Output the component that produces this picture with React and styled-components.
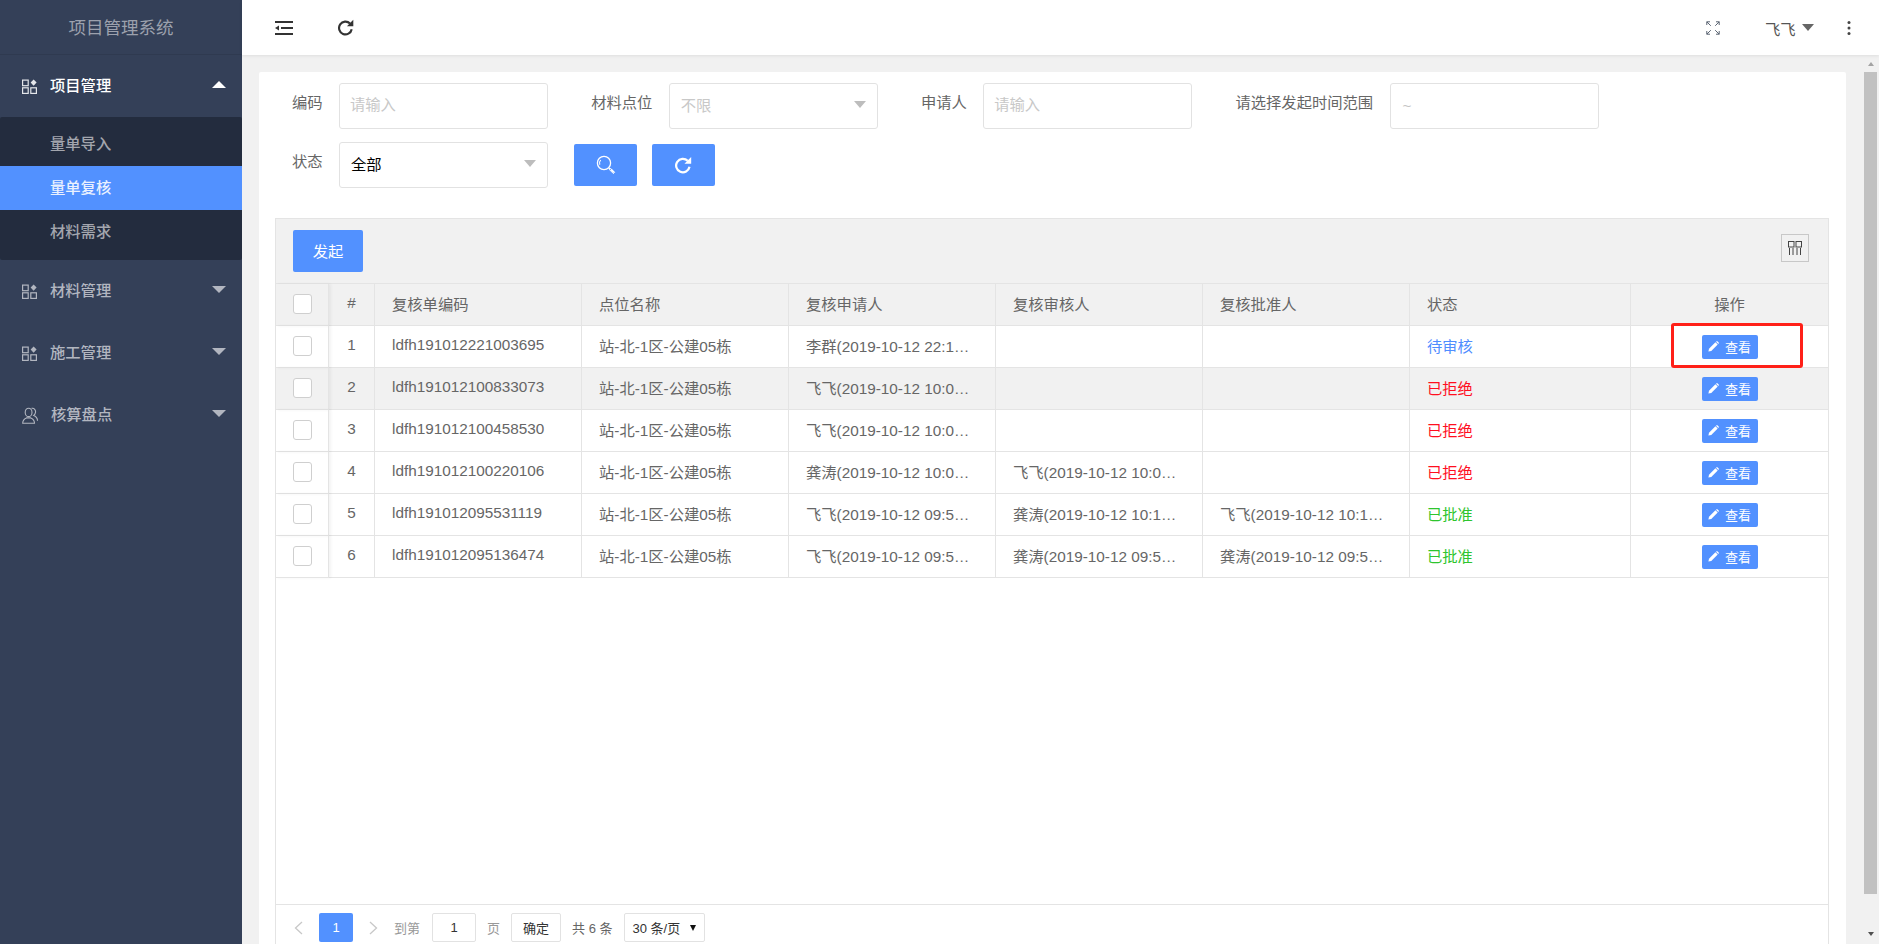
import React from 'react';
import styled, {createGlobalStyle} from 'styled-components';

const GlobalStyle = createGlobalStyle`
    html, body {
        margin: 0;
        padding: 0;
        height: 100%;
        overflow: hidden;
        background: #f1f1f1;
    }
    body, input {
        font-family: "Liberation Sans", "Noto Sans CJK SC", sans-serif;
        font-size: 15.3px;
    }
    * {
        box-sizing: border-box;
    }
`;

const Page = styled.div`
    display: flex;
    width: 100%;
    height: 100vh;
    overflow: hidden;
`;

/* sidebar */
const Sidebar = styled.aside`
    flex: 0 0 242px;
    background: #344058;
    color: #b2b6c0;
`;
const Brand = styled.div`
    height: 55px;
    line-height: 56px;
    text-align: center;
    font-size: 17.5px;
    color: #9ca1ad;
    border-bottom: 1px solid #2f3a50;
`;
const MenuItem = styled.div`
    display: flex;
    align-items: center;
    height: 62px;
    padding: 0 16px 0 22px;
    font-weight: 500;
    color: ${props => props.open ? "#ffffff" : "#b2b6c0"};
`;
const MenuLabel = styled.span`
    margin: -5px 0 0 13px;
    flex: 1;
`;
const MenuArrow = styled.span`
    width: 0;
    height: 0;
    margin-top: -3px;
    border-left: 7px solid transparent;
    border-right: 7px solid transparent;
    ${props => props.up ? "border-bottom: 7px solid #ffffff" : "border-top: 7px solid #b2b6c0"};
`;
const SubMenu = styled.div`
    background: #232c3e;
    padding: 5px 0 6px;
    border-radius: 2px;
`;
const SubItem = styled.div`
    height: 44px;
    line-height: 43px;
    padding-left: 50px;
    font-weight: 500;
    background: ${props => props.active ? "#5291ff" : "transparent"};
    color: ${props => props.active ? "#eaf1ff" : "#a3a6ae"};
`;

/* top bar */
const Main = styled.div`
    flex: 1;
    min-width: 0;
    display: flex;
    flex-direction: column;
`;
const TopBar = styled.header`
    flex: 0 0 55px;
    display: flex;
    align-items: center;
    padding: 0 28px 0 33px;
    background: #ffffff;
    box-shadow: 0 1px 3px rgba(0, 0, 0, .08);
    position: relative;
    color: #555;
`;
const TopLeft = styled.div`
    display: flex;
    align-items: center;
    gap: 45px;
    flex: 1;
`;
const TopUser = styled.div`
    display: flex;
    align-items: center;
    margin-left: 45px;
`;
const UserCaret = styled.span`
    width: 0;
    height: 0;
    margin-left: 6px;
    border-left: 6.5px solid transparent;
    border-right: 6.5px solid transparent;
    border-top: 7px solid #666;
`;
const Dots = styled.svg`
    margin-left: 33.5px;
`;

/* body */
const Body = styled.div`
    flex: 1;
    min-height: 0;
    display: flex;
`;
const Content = styled.div`
    flex: 1;
    min-width: 0;
    padding: 17px 16px 0 17px;
    overflow: hidden;
`;
const Card = styled.div`
    background: #ffffff;
    border-radius: 2px;
    padding: 11px 17px 0 16px;
`;
const Filters = styled.form`
    display: flex;
    flex-wrap: wrap;
    gap: 13px 43.2px;
    padding-left: 17px;
    margin-bottom: 30px;
    color: #666;
`;
const Field = styled.label`
    display: flex;
`;
const FieldLabel = styled.span`
    line-height: 40px;
    margin-right: 16.4px;
    white-space: nowrap;
`;
const TextInput = styled.input`
    width: 209px;
    height: 46px;
    padding: 0 10px 2px;
    border: 1px solid #e2e2e2;
    border-radius: 3px;
    outline: none;
    background: #fff;
    &::placeholder {
        color: #c8c8c8;
    }
`;
const DateValue = styled.div`
    width: 209px;
    height: 46px;
    padding: 0 12px;
    line-height: 44px;
    border: 1px solid #e2e2e2;
    border-radius: 3px;
    color: #c4c4c4;
`;
const SelectBox = styled.div`
    display: flex;
    align-items: center;
    justify-content: space-between;
    width: 209px;
    height: 46px;
    padding: 0 11px 4px 11px;
    border: 1px solid #e2e2e2;
    border-radius: 3px;
    color: ${props => props.muted ? "#c8c8c8" : "#000"};
`;
const SelectCaret = styled.span`
    width: 0;
    height: 0;
    border-left: 6.5px solid transparent;
    border-right: 6.5px solid transparent;
    border-top: 7px solid #bdbdbd;
`;
const FilterButtons = styled.div`
    display: flex;
    gap: 15px;
    margin: 2px 0 0 -17px;
`;
const IconButton = styled.button`
    display: flex;
    align-items: center;
    justify-content: center;
    width: 63px;
    height: 42px;
    padding: 0;
    border: none;
    border-radius: 2px;
    background: #5291ff;
`;

/* table */
const TableBox = styled.div`
    border: 1px solid #e4e4e4;
    background: #fff;
`;
const Toolbar = styled.div`
    display: flex;
    align-items: center;
    justify-content: space-between;
    height: 65px;
    padding: 0 19px 1px 17px;
    background: #f1f1f1;
    border-bottom: 1px solid #e4e4e4;
`;
const PrimaryButton = styled.button`
    width: 70px;
    height: 42px;
    padding: 0 0 2px;
    border: none;
    border-radius: 2px;
    background: #5291ff;
    color: #fff;
    font: inherit;
`;
const ColumnsButton = styled.button`
    display: flex;
    align-items: center;
    justify-content: center;
    width: 28px;
    height: 28px;
    margin-bottom: 5px;
    padding: 0;
    border: 1px solid #c8c8c8;
    background: transparent;
`;
const TableArea = styled.div`
    height: 621px;
    border-bottom: 1px solid #e4e4e4;
`;
const Table = styled.table`
    width: 1552px;
    table-layout: fixed;
    border-collapse: separate;
    border-spacing: 0;
    color: #666;
`;
const Row = styled.tr`
    background: ${props => props.shaded ? "#f1f1f1" : "#ffffff"};
`;
const HeadCell = styled.th`
    height: 42px;
    padding: ${props => props.center ? "0 0 4px" : "0 17px 4px"};
    font-weight: normal;
    text-align: ${props => props.center ? "center" : "left"};
    background: #f1f1f1;
    border-right: 1px solid #e4e4e4;
    border-bottom: 1px solid #e4e4e4;
    &:last-child {
        border-right: none;
    }
`;
const Cell = styled.td`
    height: 42px;
    padding: ${props => props.center ? "0 0 3px" : "0 20px 3px 17px"};
    white-space: nowrap;
    overflow: hidden;
    text-overflow: ellipsis;
    text-align: ${props => props.center ? "center" : "left"};
    color: ${props => props.color || "#666"};
    border-right: 1px solid #e4e4e4;
    border-bottom: 1px solid #e4e4e4;
`;
const ActionCell = styled.td`
    position: relative;
    height: 42px;
    padding: 0;
    text-align: center;
    border-bottom: 1px solid #e4e4e4;
`;
const CheckCell = styled.td`
    position: relative;
    height: 42px;
    padding: 0 0 1px;
    border-bottom: 1px solid #e4e4e4;
    border-right: 1px solid #e4e4e4;
    box-shadow: 2px 0 3px rgba(0, 0, 0, .05);
`;
const CheckHead = styled(CheckCell).attrs({as: "th"})`
    background: #f1f1f1;
`;
const Checkbox = styled.span`
    display: block;
    width: 19px;
    height: 20px;
    margin-left: 17px;
    background: #fff;
    border: 1px solid #cfcfcf;
    border-radius: 3px;
`;
const ViewButton = styled.button`
    display: inline-flex;
    align-items: center;
    justify-content: center;
    gap: 6px;
    width: 56px;
    height: 24px;
    padding: 0;
    border: none;
    border-radius: 2px;
    background: #5291ff;
    color: #fff;
    font: inherit;
    font-size: 13px;
    vertical-align: middle;
`;
const Highlight = styled.span`
    position: absolute;
    left: 40px;
    top: -3px;
    width: 132px;
    height: 45px;
    border: 3px solid #ff2018;
    border-radius: 3px;
    pointer-events: none;
`;

/* pagination */
const Pager = styled.div`
    display: flex;
    align-items: center;
    gap: 11px;
    height: 48px;
    padding: 0 0 3px 13px;
    font-size: 13px;
    color: #666;
`;
const PageArrow = styled.svg`
    margin: 0 5px;
`;
const PageCurrent = styled.span`
    width: 34px;
    height: 29px;
    line-height: 29px;
    text-align: center;
    border-radius: 2px;
    background: #5291ff;
    color: #fff;
`;
const PageHint = styled.span`
    color: ${props => props.dark ? "#666" : "#999"};
`;
const PageBox = styled.span`
    display: flex;
    align-items: center;
    justify-content: ${props => props.between ? "space-between" : "center"};
    width: ${props => props.width}px;
    height: 29px;
    padding: 0 ${props => props.between ? "8px" : "0"};
    border: 1px solid #e2e2e2;
    border-radius: 2px;
    background: #fff;
    color: #333;
`;
const PageInput = styled(PageBox)`
    margin-left: 1px;
`;
const PageCaret = styled.span`
    width: 0;
    height: 0;
    border-left: 3.5px solid transparent;
    border-right: 3.5px solid transparent;
    border-top: 6px solid #111;
`;

/* fake browser scrollbar of the content pane */
const ScrollTrack = styled.div`
    flex: 0 0 17px;
    display: flex;
    flex-direction: column;
    align-items: center;
    padding-top: 7px;
    background: #f1f1f1;
`;
const ScrollButton = styled.span`
    width: 0;
    height: 0;
    border-left: 3.5px solid transparent;
    border-right: 3.5px solid transparent;
    ${props => props.up ? "border-bottom: 4px solid #a3a3a3" : "border-top: 4px solid #505050"};
`;
const ScrollThumb = styled.span`
    width: 13px;
    height: 822px;
    margin: 6px 0 38px;
    background: #c1c1c1;
`;

const AppsIcon = ({color}) => (
    <svg width="15" height="15" viewBox="0 0 15 15" fill="none" stroke={color} strokeWidth="1.2">
        <rect x="0.6" y="1.1" width="5.6" height="5.6" />
        <rect x="0.6" y="8.8" width="5.6" height="5.6" />
        <rect x="8.8" y="8.8" width="5.6" height="5.6" />
        <path d="M11.6 0.4l3 3.2-3 3.2-3-3.2z" fill={color} stroke="none" />
    </svg>
);

const UserIcon = ({color}) => (
    <svg width="16" height="17" viewBox="0 0 16 17" fill="none" stroke={color} strokeWidth="1.1">
        <ellipse cx="6.6" cy="5.4" rx="3.4" ry="4.2" />
        <path d="M0.7 16.2c0-3 1.7-4.4 3.7-5.3h4.4c2 .9 3.7 2.3 3.7 5.3z" />
        <path d="M9.6 1.4c2.6-.6 4.3 1.6 3.9 4-.2 1.4-.9 2.4-1.8 3 2 .8 3.8 2.3 3.8 5.4" />
    </svg>
);

const RefreshIcon = ({color, size}) => (
    <svg width={size} height={size} viewBox="1 0 16 16" fill="none">
        <path d="M12.3 4.3A6 6 0 1 0 13.9 9.6" stroke={color} strokeWidth="2" />
        <path d="M15.4 0.8v6h-6z" fill={color} />
    </svg>
);

const OutdentIcon = () => (
    <svg width="18" height="14" viewBox="0 0 18 14" fill="#333">
        <rect x="0" y="0" width="18" height="2" />
        <rect x="6" y="6" width="12" height="2" />
        <rect x="0" y="12" width="18" height="2" />
        <path d="M0 7l4-2.6v5.2z" />
    </svg>
);

const FullscreenIcon = () => (
    <svg width="14" height="14" viewBox="0 0 14 14" fill="none" stroke="#5a6472" strokeWidth="1">
        <path d="M0.8 4V0.8H4M0.8 0.8l4 4" />
        <path d="M13.2 4V0.8H10M13.2 0.8l-4 4" />
        <path d="M0.8 10v3.2H4M0.8 13.2l4-4" />
        <path d="M13.2 10v3.2H10M13.2 13.2l-4-4" />
    </svg>
);

const SearchIcon = () => (
    <svg width="20" height="20" viewBox="0 0 20 20" fill="none" stroke="#fff">
        <circle cx="8" cy="8" r="6.6" strokeWidth="1.3" />
        <path d="M3.8 9.8a4.6 4.6 0 0 1 .9-4.8" strokeWidth="1.1" />
        <path d="M13 13l1 1M15 14.4l3 3" strokeWidth="1.6" />
        <path d="M14.6 13.4l4 4-1.2 1.2-4-4z" strokeWidth="1" />
    </svg>
);

const ColumnsIcon = () => (
    <svg width="16" height="16" viewBox="0 0 16 16" fill="none" stroke="#444" strokeWidth="1">
        <rect x="1.5" y="1.5" width="5.5" height="5.5" />
        <rect x="9" y="1.5" width="5.5" height="5.5" />
        <path d="M2.5 8v7M6 8v7M10 8v7M13.5 8v7" />
    </svg>
);

const PencilIcon = () => (
    <svg width="11" height="11" viewBox="0 0 11 11" fill="#fff">
        <path d="M0.4 10.6l.6-2.9 6.4-6.4 2.3 2.3-6.4 6.4z" />
        <path d="M8 .7l.5-.4c.3-.2.6-.2.9 0l1.3 1.3c.2.3.2.6 0 .9l-.4.5z" />
    </svg>
);

const Chevron = ({left}) => (
    <PageArrow width="9" height="14" viewBox="0 0 9 14" fill="none" stroke="#c8c8c8" strokeWidth="1.3">
        <path d={left ? "M8 1L1.5 7 8 13" : "M1 1l6.5 6L1 13"} />
    </PageArrow>
);

const STATUS_COLORS = {
    "待审核": "#4f8dff",
    "已拒绝": "#ff0f1f",
    "已批准": "#2ec52e"
};

const rows = [
    ["ldfh191012221003695", "李群(2019-10-12 22:10:36)", "", "", "待审核"],
    ["ldfh191012100833073", "飞飞(2019-10-12 10:08:33)", "", "", "已拒绝"],
    ["ldfh191012100458530", "飞飞(2019-10-12 10:04:58)", "", "", "已拒绝"],
    ["ldfh191012100220106", "龚涛(2019-10-12 10:02:20)", "飞飞(2019-10-12 10:03:11)", "", "已拒绝"],
    ["ldfh191012095531119", "飞飞(2019-10-12 09:55:31)", "龚涛(2019-10-12 10:12:01)", "飞飞(2019-10-12 10:14:22)", "已批准"],
    ["ldfh191012095136474", "飞飞(2019-10-12 09:51:36)", "龚涛(2019-10-12 09:53:10)", "龚涛(2019-10-12 09:54:47)", "已批准"]
];

const columnWidths = [53, 46, 207, 207, 207, 207, 207, 221, 197];

export default function App() {
    return (
        <Page>
            <GlobalStyle />
            <Sidebar>
                <Brand>项目管理系统</Brand>
                <MenuItem open>
                    <AppsIcon color="#e4e6ea" />
                    <MenuLabel>项目管理</MenuLabel>
                    <MenuArrow up />
                </MenuItem>
                <SubMenu>
                    <SubItem>量单导入</SubItem>
                    <SubItem active>量单复核</SubItem>
                    <SubItem>材料需求</SubItem>
                </SubMenu>
                <MenuItem>
                    <AppsIcon color="#b2b6c0" />
                    <MenuLabel>材料管理</MenuLabel>
                    <MenuArrow />
                </MenuItem>
                <MenuItem>
                    <AppsIcon color="#b2b6c0" />
                    <MenuLabel>施工管理</MenuLabel>
                    <MenuArrow />
                </MenuItem>
                <MenuItem>
                    <UserIcon color="#b2b6c0" />
                    <MenuLabel>核算盘点</MenuLabel>
                    <MenuArrow />
                </MenuItem>
            </Sidebar>

            <Main>
                <TopBar>
                    <TopLeft>
                        <OutdentIcon />
                        <RefreshIcon color="#333" size={17} />
                    </TopLeft>
                    <FullscreenIcon />
                    <TopUser>
                        飞飞
                        <UserCaret />
                    </TopUser>
                    <Dots width="4" height="14" viewBox="0 0 4 14" fill="#444">
                        <circle cx="2" cy="1.6" r="1.5" />
                        <circle cx="2" cy="7" r="1.5" />
                        <circle cx="2" cy="12.4" r="1.5" />
                    </Dots>
                </TopBar>

                <Body>
                    <Content>
                        <Card>
                            <Filters>
                                <Field>
                                    <FieldLabel>编码</FieldLabel>
                                    <TextInput placeholder="请输入" />
                                </Field>
                                <Field>
                                    <FieldLabel>材料点位</FieldLabel>
                                    <SelectBox muted>不限<SelectCaret /></SelectBox>
                                </Field>
                                <Field>
                                    <FieldLabel>申请人</FieldLabel>
                                    <TextInput placeholder="请输入" />
                                </Field>
                                <Field>
                                    <FieldLabel>请选择发起时间范围</FieldLabel>
                                    <DateValue>~</DateValue>
                                </Field>
                                <Field>
                                    <FieldLabel>状态</FieldLabel>
                                    <SelectBox>全部<SelectCaret /></SelectBox>
                                </Field>
                                <FilterButtons>
                                    <IconButton type="button"><SearchIcon /></IconButton>
                                    <IconButton type="button"><RefreshIcon color="#fff" size={18} /></IconButton>
                                </FilterButtons>
                            </Filters>

                            <TableBox>
                                <Toolbar>
                                    <PrimaryButton>发起</PrimaryButton>
                                    <ColumnsButton><ColumnsIcon /></ColumnsButton>
                                </Toolbar>
                                <TableArea>
                                    <Table>
                                        <colgroup>
                                            {columnWidths.map((w, i) => <col key={i} width={w} />)}
                                        </colgroup>
                                        <thead>
                                            <tr>
                                                <CheckHead><Checkbox /></CheckHead>
                                                <HeadCell center>#</HeadCell>
                                                <HeadCell>复核单编码</HeadCell>
                                                <HeadCell>点位名称</HeadCell>
                                                <HeadCell>复核申请人</HeadCell>
                                                <HeadCell>复核审核人</HeadCell>
                                                <HeadCell>复核批准人</HeadCell>
                                                <HeadCell>状态</HeadCell>
                                                <HeadCell center>操作</HeadCell>
                                            </tr>
                                        </thead>
                                        <tbody>
                                            {rows.map((row, i) => (
                                                <Row key={row[0]} shaded={i === 1}>
                                                    <CheckCell><Checkbox /></CheckCell>
                                                    <Cell center>{i + 1}</Cell>
                                                    <Cell>{row[0]}</Cell>
                                                    <Cell>站-北-1区-公建05栋</Cell>
                                                    <Cell>{row[1]}</Cell>
                                                    <Cell>{row[2]}</Cell>
                                                    <Cell>{row[3]}</Cell>
                                                    <Cell color={STATUS_COLORS[row[4]]}>{row[4]}</Cell>
                                                    <ActionCell>
                                                        <ViewButton><PencilIcon />查看</ViewButton>
                                                        {i === 0 && <Highlight />}
                                                    </ActionCell>
                                                </Row>
                                            ))}
                                        </tbody>
                                    </Table>
                                </TableArea>
                                <Pager>
                                    <Chevron left />
                                    <PageCurrent>1</PageCurrent>
                                    <Chevron />
                                    <PageHint>到第</PageHint>
                                    <PageInput width={44}>1</PageInput>
                                    <PageHint>页</PageHint>
                                    <PageBox width={50}>确定</PageBox>
                                    <PageHint dark>共 6 条</PageHint>
                                    <PageBox width={81} between>30 条/页<PageCaret /></PageBox>
                                </Pager>
                            </TableBox>
                        </Card>
                    </Content>
                    <ScrollTrack>
                        <ScrollButton up />
                        <ScrollThumb />
                        <ScrollButton />
                    </ScrollTrack>
                </Body>
            </Main>
        </Page>
    );
}
